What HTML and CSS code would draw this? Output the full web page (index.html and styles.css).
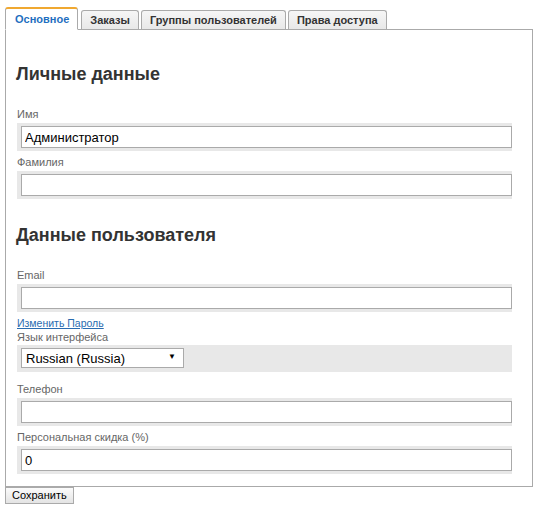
FILE: index.html
```html
<!DOCTYPE html>
<html lang="ru">
<head>
<meta charset="utf-8">
<title>Пользователь</title>
<link rel="stylesheet" href="styles.css">
</head>
<body>
<div class="page">
  <div class="tabs">
    <div class="tab active">Основное</div>
    <div class="tab">Заказы</div>
    <div class="tab">Группы пользователей</div>
    <div class="tab">Права доступа</div>
  </div>
  <div class="panel">
    <h2 class="heading">Личные данные</h2>
    <div class="field">
      <div class="label">Имя</div>
      <div class="box"><input class="input" type="text" value="Администратор"></div>
    </div>
    <div class="field">
      <div class="label">Фамилия</div>
      <div class="box"><input class="input" type="text" value=""></div>
    </div>
    <h2 class="heading second">Данные пользователя</h2>
    <div class="field">
      <div class="label">Email</div>
      <div class="box"><input class="input" type="text" value=""></div>
    </div>
    <a class="link" href="#">Изменить Пароль</a>
    <div class="label lang">Язык интерфейса</div>
    <div class="box selbox">
      <div class="selwrap">
        <select class="select"><option>Russian (Russia)</option></select>
        <span class="caret">▼</span>
      </div>
    </div>
    <div class="field">
      <div class="label">Телефон</div>
      <div class="box"><input class="input" type="text" value=""></div>
    </div>
    <div class="field last">
      <div class="label">Персональная скидка (%)</div>
      <div class="box"><input class="input" type="text" value="0"></div>
    </div>
  </div>
  <button class="save" type="button">Сохранить</button>
</div>
</body>
</html>
```
FILE: styles.css
```css
html, body {
  margin: 0;
  padding: 0;
  background: #fff;
}
body {
  font-family: "Liberation Sans", Arial, sans-serif;
  color: #333;
}
.page {
  width: 528px;
  margin-left: 5px;
  padding-top: 7px;
}
.tabs {
  display: flex;
  align-items: flex-end;
  gap: 2px;
  margin-bottom: -1px;
}
.tab {
  font-size: 11px;
  font-weight: bold;
  color: #333;
  line-height: 18px;
  height: 18px;
  padding: 0 8px;
  border: 1px solid #aaa;
  border-bottom: none;
  border-radius: 3px 3px 0 0;
  background: linear-gradient(#f6f6f6, #e8e8e8);
  margin-bottom: 1px;
}
.tab.active {
  position: relative;
  z-index: 1;
  color: #1f6fc0;
  background: #fff;
  border-top: 2px solid #f0a830;
  border-bottom: 1px solid #fff;
  line-height: 20px;
  height: 20px;
  padding: 0 8px 0 9px;
  margin-right: 1px;
  margin-bottom: 0;
}
.panel {
  border: 1px solid #aaa;
  padding: 34px 20px 12px 11px;
}
.heading {
  font-size: 18px;
  line-height: 20px;
  font-weight: bold;
  color: #333;
  margin: 0 0 24px -1px;
}
.heading.second {
  margin-top: 26px;
}
.field {
  margin-bottom: 5px;
}
.field.last {
  margin-bottom: 0;
}
.label {
  font-size: 11px;
  line-height: 13px;
  color: #666;
  margin-bottom: 2px;
}
.box {
  background: #e8e8e8;
  padding: 3px 0 3px 4px;
}
.input {
  display: block;
  box-sizing: border-box;
  width: 100%;
  height: 22px;
  margin: 0;
  border: 1px solid #aaa;
  padding: 0 3px;
  font-family: "Liberation Sans", Arial, sans-serif;
  font-size: 13px;
  color: #000;
  background: #fff;
  outline: none;
}
.link {
  display: block;
  font-size: 10.5px;
  line-height: 12px;
  color: #2a6cb0;
  text-decoration: underline;
  width: max-content;
}
.label.lang {
  margin-top: 2px;
  margin-bottom: 1px;
}
.selbox {
  padding: 3px 0 4px 4px;
  margin-bottom: 11px;
}
.selwrap {
  position: relative;
  width: 163px;
  height: 20px;
}
.select {
  appearance: none;
  -webkit-appearance: none;
  box-sizing: border-box;
  width: 163px;
  height: 20px;
  margin: 0;
  border: 1px solid #aaa;
  background: #fff;
  padding: 0 4px;
  font-family: "Liberation Sans", Arial, sans-serif;
  font-size: 13px;
  color: #000;
  border-radius: 0;
}
.caret {
  position: absolute;
  right: 8px;
  top: 4px;
  font-size: 8px;
  line-height: 10px;
  color: #000;
  pointer-events: none;
}
.save {
  display: block;
  margin: 0;
  height: 17px;
  padding: 0 6px;
  border: 1px solid #aaa;
  background: linear-gradient(#fbfbfb, #e4e4e4);
  font-family: "Liberation Sans", Arial, sans-serif;
  font-size: 11px;
  line-height: 15px;
  color: #000;
  border-radius: 0;
}
```
